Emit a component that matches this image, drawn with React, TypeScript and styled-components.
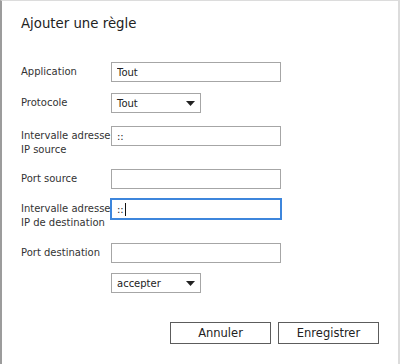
import * as React from 'react';
import styled, { createGlobalStyle } from 'styled-components';

const GlobalStyle = createGlobalStyle`
    html, body {
        margin: 0;
        padding: 0;
        background: #ffffff;
    }
    body {
        font-family: 'DejaVu Sans', Verdana, sans-serif;
        color: #333333;
    }
`;

interface FieldRow {
    label: string;
    kind: 'text' | 'select' | 'focused';
    value: string;
    gap: number;
    wide?: boolean;
}

const rows: FieldRow[] = [
    { label: 'Application', kind: 'text', value: 'Tout', gap: 31 },
    { label: 'Protocole', kind: 'select', value: 'Tout', gap: 11 },
    { label: 'Intervalle adresse IP source', kind: 'text', value: '::', gap: 13 },
    { label: 'Port source', kind: 'text', value: '', gap: 12 },
    { label: 'Intervalle adresse IP de destination', kind: 'focused', value: '::', gap: 10 },
    { label: 'Port destination', kind: 'text', value: '', gap: 13 },
    { label: '', kind: 'select', value: 'accepter', gap: 10 },
];

const ArrowIcon: React.FC = () => (
    <svg width="9" height="5" viewBox="0 0 9 5">
        <path d="M0 0 H9 L4.5 5 Z" fill="#222" />
    </svg>
);

export default function App() {
    return (
        <>
            <GlobalStyle />
            <Dialog>
                <Title>Ajouter une règle</Title>
                {rows.map((row, i) => (
                    <Row key={i} $gap={row.gap}>
                        <Label>{row.label}</Label>
                        {row.kind === 'select' ? (
                            <SelectBox>
                                <span>{row.value}</span>
                                <ArrowIcon />
                            </SelectBox>
                        ) : row.kind === 'focused' ? (
                            <FocusedField>
                                {row.value}
                                <Caret />
                            </FocusedField>
                        ) : (
                            <TextInput type="text" value={row.value} readOnly />
                        )}
                    </Row>
                ))}
                <Actions>
                    <Button>Annuler</Button>
                    <Button>Enregistrer</Button>
                </Actions>
            </Dialog>
        </>
    );
}

const Dialog = styled.div`
    box-sizing: border-box;
    width: 400px;
    height: 364px;
    border-top: 1px solid #dcdcdc;
    border-right: 2px solid #dcdcdc;
    border-left: 2px solid #9c9c9c;
    padding: 15px 19px 0 19px;
    display: flex;
    flex-direction: column;
    background: #ffffff;
`;

const Title = styled.h1`
    margin: 0;
    font-size: 13.3px;
    font-weight: normal;
    line-height: normal;
    color: #222222;
`;

const Row = styled.div<{ $gap: number }>`
    display: grid;
    grid-template-columns: 90px 170px;
    align-items: start;
    margin-top: ${(p) => p.$gap}px;
`;

const Label = styled.div`
    font-size: 10px;
    line-height: 14px;
    padding-top: 3px;
    color: #333333;
    white-space: normal;
    overflow: visible;
`;

const fieldBase = `
    box-sizing: border-box;
    height: 20px;
    border: 1px solid #a6a6a6;
    background: #ffffff;
    font-family: 'DejaVu Sans', Verdana, sans-serif;
    font-size: 10px;
    color: #222222;
    padding: 0 5px;
    margin: 0;
`;

const TextInput = styled.input`
    ${fieldBase}
    width: 170px;
    outline: none;
    border-radius: 0;
`;

const FocusedField = styled.div`
    ${fieldBase}
    width: 170px;
    border-color: #3d86dc;
    box-shadow: 0 0 0 1px #3d86dc;
    display: flex;
    align-items: center;
`;

const Caret = styled.span`
    display: inline-block;
    width: 1px;
    height: 13px;
    margin-left: 1px;
    background: #111111;
`;

const SelectBox = styled.div`
    ${fieldBase}
    width: 90px;
    display: flex;
    align-items: center;
    justify-content: space-between;
    padding: 0 5px 0 5px;
`;

const Actions = styled.div`
    display: flex;
    justify-content: flex-end;
    gap: 7px;
    margin-top: 29px;
`;

const Button = styled.button`
    box-sizing: border-box;
    width: 101px;
    height: 22px;
    border: 1px solid #5c5c5c;
    border-radius: 0;
    background: #ffffff;
    font-family: 'DejaVu Sans', Verdana, sans-serif;
    font-size: 11.5px;
    color: #222222;
    padding: 0;
`;
